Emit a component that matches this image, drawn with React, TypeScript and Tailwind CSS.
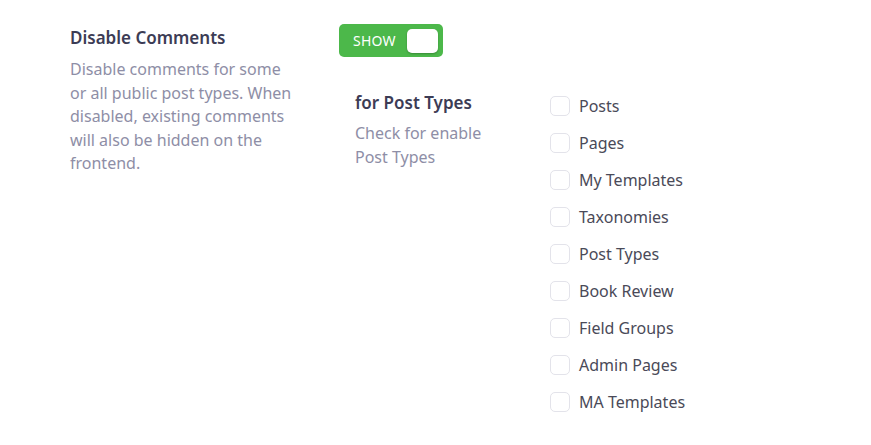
const postTypes = [
  'Posts',
  'Pages',
  'My Templates',
  'Taxonomies',
  'Post Types',
  'Book Review',
  'Field Groups',
  'Admin Pages',
  'MA Templates',
];

export default function App() {
  return (
    <div className="w-[871px] h-[445px] bg-white font-['Noto_Sans',sans-serif] flex pt-[24px] pl-[70px]">
      {/* Left label column */}
      <div className="w-[269px] shrink-0">
        <h3 className="text-[17px] leading-[26px] font-semibold text-[#3c3c55] mt-[1px]">Disable Comments</h3>
        <p className="mt-[7px] text-[16px] leading-[23.5px] text-[#8e8ea6] w-[225px]">
          Disable comments for some or all public post types. When disabled, existing comments will also be hidden on the frontend.
        </p>
      </div>

      {/* Right settings column */}
      <div className="flex flex-col">
        <button className="w-[104px] h-[33px] rounded-[5px] bg-[#4cb84a] flex items-center justify-between pl-[14px] pr-[5px]">
          <span className="text-[14px] text-white tracking-[0.2px]">SHOW</span>
          <span className="w-[31px] h-[24px] rounded-[5px] bg-white shadow-[0_1px_2px_rgba(0,0,0,0.25)]" />
        </button>

        <div className="flex mt-[31px] pl-[16px]">
          <div className="w-[195px] shrink-0">
            <h4 className="text-[17px] leading-[26px] font-semibold text-[#3c3c55] mt-[2px]">for Post Types</h4>
            <p className="mt-[6px] text-[16px] leading-[23.5px] text-[#8e8ea6]">
              Check for enable
              <br />
              Post Types
            </p>
          </div>
          <div className="flex flex-col gap-[17px] pt-[8px]">
            {postTypes.map((t) => (
              <label key={t} className="flex items-center gap-[9px] h-[20px]">
                <span className="w-[20px] h-[20px] rounded-[5px] border border-[#e3e3ea] bg-white" />
                <span className="text-[16px] text-[#4a4a58]">{t}</span>
              </label>
            ))}
          </div>
        </div>
      </div>
    </div>
  );
}
